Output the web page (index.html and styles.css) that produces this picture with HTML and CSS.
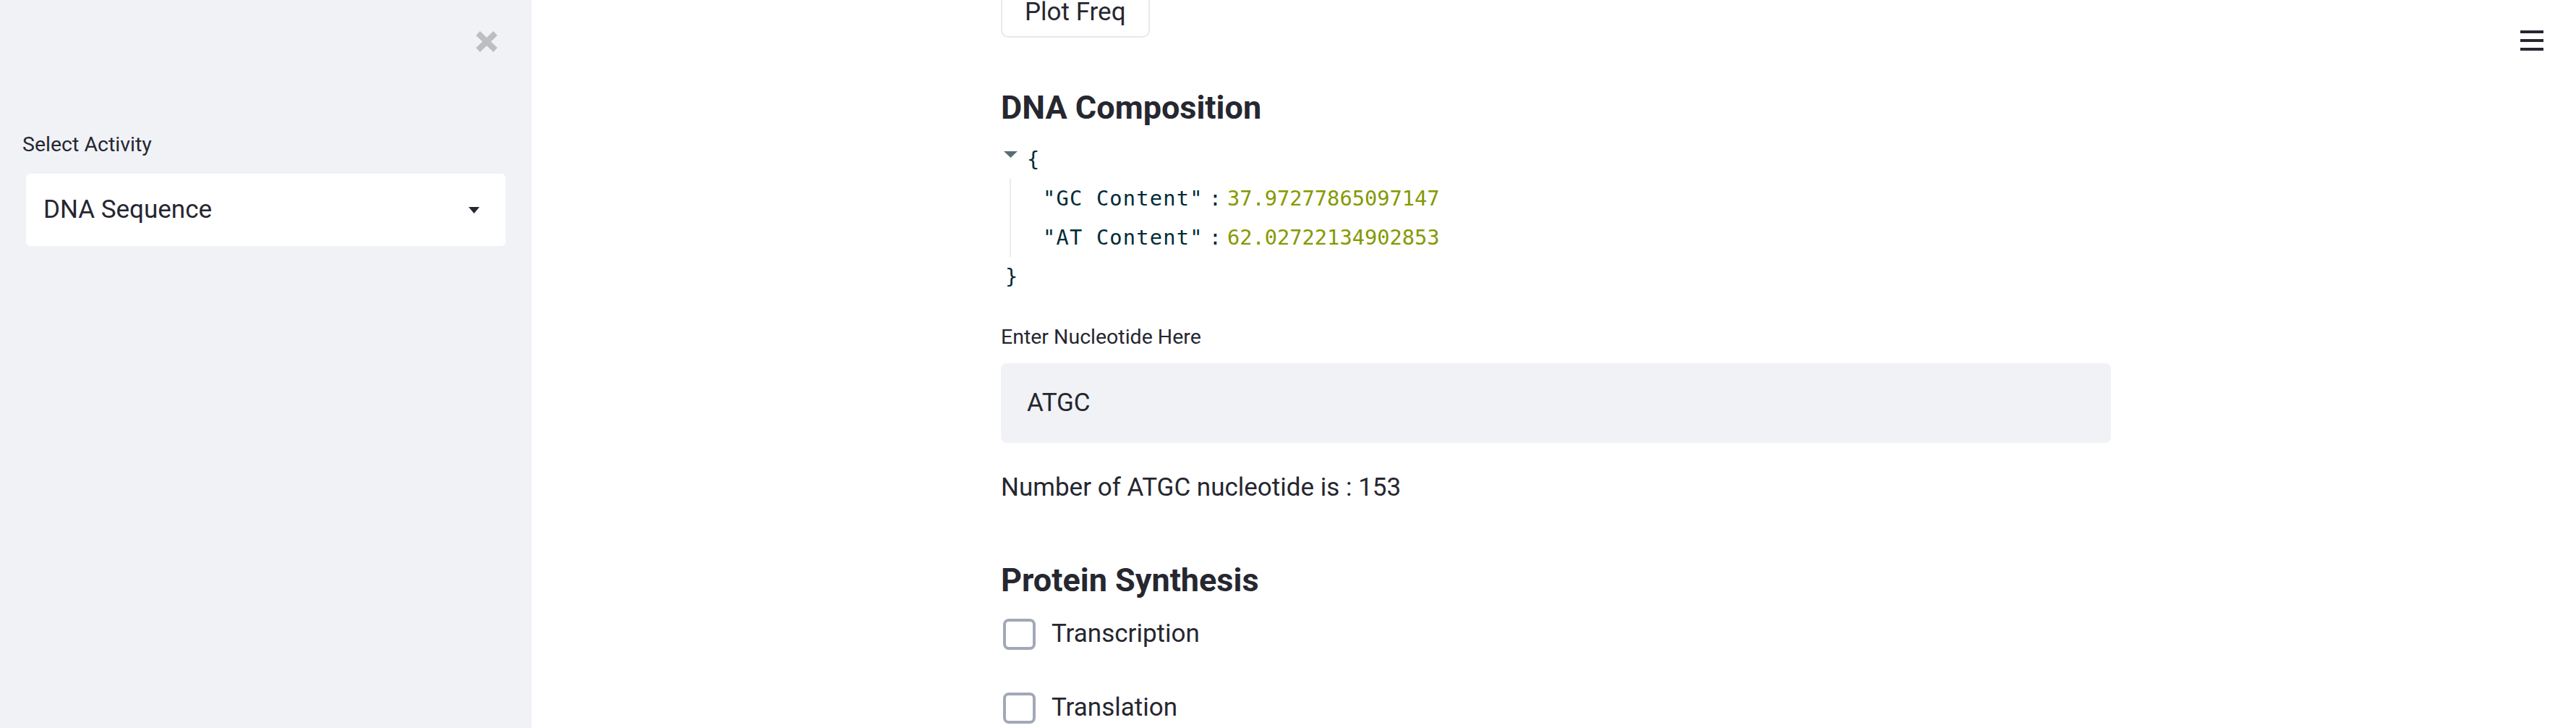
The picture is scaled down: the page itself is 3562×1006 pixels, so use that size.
FILE: index.html
```html
<!DOCTYPE html>
<html lang="en">
<head>
<meta charset="utf-8">
<title>DNA App</title>
<link rel="stylesheet" href="styles.css">
</head>
<body>
<div class="app">
  <aside class="sidebar">
    <div class="sidebar-top">
      <button class="close-btn" aria-label="Close sidebar">
        <svg width="32" height="31" viewBox="0 0 32 31"><path d="M4 4 L28 27 M28 4 L4 27" stroke="#bdbec2" stroke-width="8" fill="none"/></svg>
      </button>
    </div>
    <label class="widget-label side-label">Select Activity</label>
    <div class="select">
      <span class="select-value">DNA Sequence</span>
      <svg class="select-arrow" width="15" height="9" viewBox="0 0 15 9"><polygon points="0,0 15,0 7.5,9" fill="#262730"/></svg>
    </div>
  </aside>
  <main class="main">
    <div class="block">
      <button class="btn">Plot Freq</button>
      <h3 class="heading h-dna">DNA Composition</h3>
      <div class="json">
        <div class="json-row json-open">
          <svg class="json-toggle" width="19" height="9" viewBox="0 0 19 9"><polygon points="0,0 19,0 9.5,9" fill="#586e75"/></svg>
          <span class="brace">{</span>
        </div>
        <div class="json-body">
          <div class="json-row"><span class="key">"GC Content"</span><span class="colon">:</span><span class="num">37.97277865097147</span></div>
          <div class="json-row"><span class="key">"AT Content"</span><span class="colon">:</span><span class="num">62.02722134902853</span></div>
        </div>
        <div class="json-row json-close"><span class="brace">}</span></div>
      </div>
      <label class="widget-label main-label">Enter Nucleotide Here</label>
      <div class="text-input"><span class="input-value">ATGC</span></div>
      <p class="text">Number of ATGC nucleotide is : 153</p>
      <h3 class="heading h-protein">Protein Synthesis</h3>
      <label class="checkbox cb-first"><span class="box"></span><span class="cb-label">Transcription</span></label>
      <label class="checkbox cb-second"><span class="box"></span><span class="cb-label">Translation</span></label>
    </div>
  </main>
  <button class="menu-btn" aria-label="Menu">
    <svg width="32" height="28" viewBox="0 0 32 28"><rect x="0" y="0" width="32" height="4" fill="#262730"/><rect x="0" y="12" width="32" height="4" fill="#262730"/><rect x="0" y="24" width="32" height="4" fill="#262730"/></svg>
  </button>
</div>
</body>
</html>
```

FILE: styles.css
```css
html, body {
  margin: 0;
  padding: 0;
  background: #ffffff;
  overflow: hidden;
}

body {
  font-family: Roboto, "Noto Sans", "Liberation Sans", sans-serif;
  color: #262730;
}

.app {
  position: relative;
  display: flex;
  width: 3562px;
  height: 1006px;
}

/* Sidebar */
.sidebar {
  flex: 0 0 735px;
  width: 735px;
  height: 1006px;
  background: #f0f2f6;
  box-sizing: border-box;
  padding-top: 42px;
  display: flex;
  flex-direction: column;
}

.sidebar-top {
  display: flex;
  justify-content: flex-end;
  padding-right: 46px;
  height: 31px;
}

.close-btn {
  border: 0;
  background: transparent;
  padding: 0;
  margin: 0;
  width: 32px;
  height: 31px;
  display: block;
}

.close-btn svg {
  display: block;
}

.widget-label {
  display: block;
  font-size: 28.5px;
  line-height: 40px;
  color: #262730;
}

.side-label {
  margin-top: 107px;
  padding-left: 31px;
}

.select {
  margin-top: 20px;
  margin-left: 36px;
  width: 663px;
  height: 100px;
  box-sizing: border-box;
  background: #ffffff;
  border-radius: 6px;
  display: flex;
  align-items: center;
  justify-content: space-between;
  padding: 0 36px 0 24px;
}

.select-value {
  font-size: 35px;
  line-height: 56px;
}

.select-arrow {
  display: block;
}

/* Main */
.main {
  flex: 1;
  box-sizing: border-box;
  padding-left: 649px;
}

.block {
  width: 1535px;
  display: flex;
  flex-direction: column;
  align-items: flex-start;
}

.btn {
  margin-top: -22px;
  font-family: Roboto, "Noto Sans", "Liberation Sans", sans-serif;
  font-size: 35px;
  line-height: 56px;
  color: #262730;
  background: #ffffff;
  border: 2px solid #e6e9ef;
  border-radius: 10px;
  padding: 9px 31px 5px;
}

.heading {
  margin: 0;
  font-size: 45px;
  line-height: 60px;
  font-weight: 700;
  color: #262730;
}

.h-dna {
  margin-top: 67px;
}

.h-protein {
  margin-top: 70px;
}

/* JSON viewer */
.json {
  margin-top: 14px;
  font-family: "DejaVu Sans Mono", "Liberation Mono", monospace;
  font-size: 28.7px;
  color: #002b36;
  width: 100%;
}

.json-row {
  height: 54px;
  line-height: 54px;
  display: flex;
  align-items: flex-start;
  white-space: pre;
}

.json-open {
  padding-left: 4px;
}

.json-toggle {
  display: block;
  margin-top: 16px;
  margin-right: 13px;
}

.json-body {
  margin-left: 12px;
  border-left: 2px solid #ebebeb;
  padding-left: 44px;
}

.key {
  letter-spacing: 1.2px;
  color: #002b36;
}

.colon {
  margin: 0 8px;
  color: #002b36;
}

.num {
  color: #859900;
}

.json-close {
  padding-left: 6px;
}

/* Text input */
.main-label {
  margin-top: 37px;
}

.text-input {
  margin-top: 16px;
  width: 1535px;
  height: 110px;
  box-sizing: border-box;
  background: #f0f2f6;
  border-radius: 8px;
  display: flex;
  align-items: center;
  padding-left: 36px;
}

.input-value {
  font-size: 35px;
  line-height: 56px;
  color: #262730;
}

.text {
  margin: 34px 0 0;
  font-size: 35px;
  line-height: 56px;
}

/* Checkboxes */
.checkbox {
  display: flex;
  align-items: center;
  height: 56px;
  font-size: 35px;
  line-height: 56px;
}

.cb-first {
  margin-top: 16px;
}

.cb-second {
  margin-top: 46px;
}

.box {
  width: 45px;
  height: 43px;
  box-sizing: border-box;
  border: 4px solid #a3a8b8;
  border-radius: 8px;
  margin-left: 3px;
  margin-right: 22px;
  background: #ffffff;
}

/* Header menu (overlay) */
.menu-btn {
  position: absolute;
  top: 42px;
  right: 45px;
  border: 0;
  background: transparent;
  padding: 0;
  margin: 0;
  width: 32px;
  height: 28px;
}

.menu-btn svg {
  display: block;
}
```
